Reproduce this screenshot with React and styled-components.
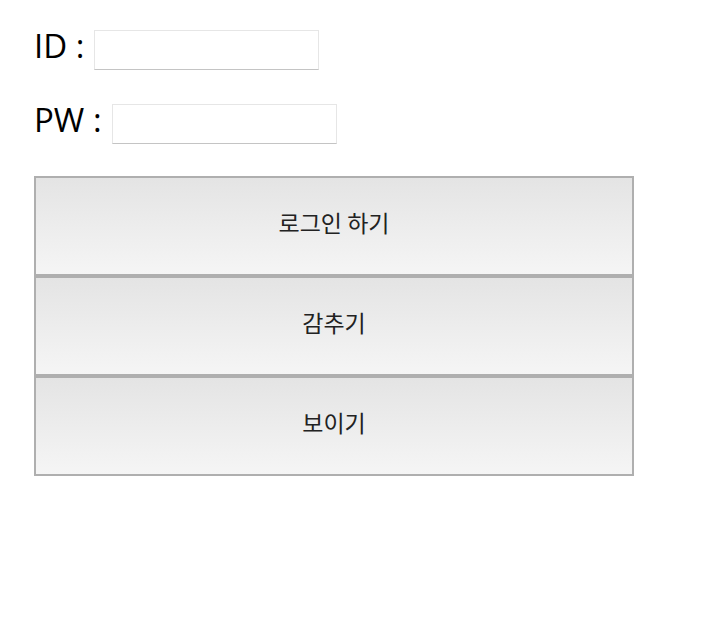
import { useState } from "react";
import styled, { createGlobalStyle } from "styled-components";

const GlobalStyle = createGlobalStyle`
    body {
        margin: 0;
        background: #fff;
        font-family: "Open Sans", "Noto Sans CJK KR", sans-serif;
    }
`

const Container = styled.div`
    padding: 30px 0 0 34px;
    display: flex;
    flex-direction: column;
`

const Row = styled.div`
    display: flex;
    align-items: center;
    height: 40px;
    margin-bottom: ${(props) => props.$gap}px;
`

const Label = styled.label`
    font-family: "Open Sans", sans-serif;
    font-size: 33px;
    color: #000;
    margin-right: 10px;
    line-height: 40px;
    margin-top: -8px;
    white-space: pre;
`

const Input = styled.input`
    box-sizing: border-box;
    width: 225px;
    height: 40px;
    border: 1px solid #e6e6e6;
    border-bottom: 1px solid #c4c4c4;
    outline: none;
    padding: 0 6px;
    font-size: 16px;
`

const Buttons = styled.div`
    display: flex;
    flex-direction: column;
    width: 600px;
`

const Button = styled.button`
    box-sizing: border-box;
    height: 100px;
    width: 100%;
    border: 2px solid #afafaf;
    background: linear-gradient(#e4e4e4, #f5f5f5);
    font-family: "Noto Sans CJK KR", sans-serif;
    font-size: 23px;
    color: #222;
    cursor: pointer;
    padding-bottom: 9px;
`

const App = () => {
    const [id, setId] = useState("");
    const [pw, setPw] = useState("");
    const [hidden, setHidden] = useState(false);

    return (
        <Container>
            <GlobalStyle />
            <Row $gap={34}>
                <Label>ID :</Label>
                <Input type="text" value={id} onChange={(e) => setId(e.target.value)} />
            </Row>
            <Row $gap={32}>
                <Label>PW :</Label>
                <Input type={hidden ? "password" : "text"} value={pw} onChange={(e) => setPw(e.target.value)} />
            </Row>
            <Buttons>
                <Button>로그인 하기</Button>
                <Button onClick={() => setHidden(true)}>감추기</Button>
                <Button onClick={() => setHidden(false)}>보이기</Button>
            </Buttons>
        </Container>
    );
};

export default App;
